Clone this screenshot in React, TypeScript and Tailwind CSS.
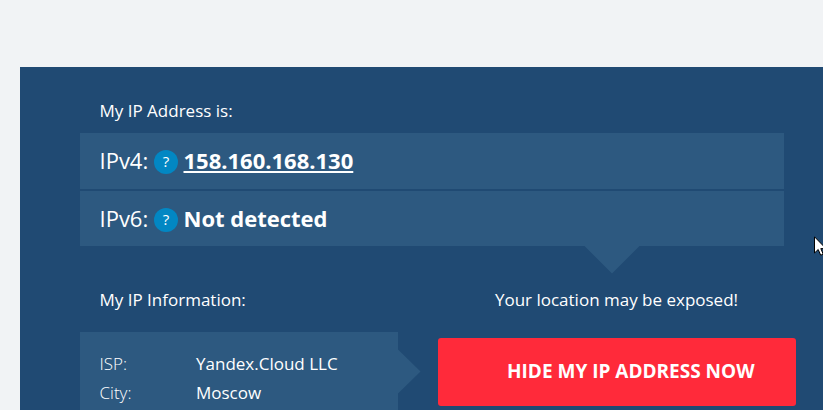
import React from "react";

function HelpBadge() {
  return (
    <span className="ml-[6px] mr-[5.5px] mt-[3px] flex h-6 w-6 shrink-0 items-center justify-center rounded-full bg-[#0287c3] pb-px text-[15px] leading-none">
      ?
    </span>
  );
}

function AddressRow({ label, children, className }: { label: string; children: React.ReactNode; className: string }) {
  return (
    <div className={`flex items-center bg-[#2d5980] pl-5 text-[22px] leading-[30px] ${className}`}>
      <span className="-ml-[0.5px] mr-[0.5px] w-[48px] whitespace-nowrap">{label}</span>
      <HelpBadge />
      {children}
    </div>
  );
}

function InfoRow({ label, value }: { label: string; value: string }) {
  return (
    <div className="flex h-[29px] items-center">
      <dt className="w-[96.5px] font-light">{label}</dt>
      <dd>{value}</dd>
    </div>
  );
}

export default function App() {
  return (
    <div className="relative h-[410px] w-[823px] overflow-hidden bg-[#f1f3f5] pl-5 pt-[67px] font-['Open_Sans','Noto_Sans',sans-serif] text-[17px] text-white">
      <main className="h-[343px] bg-[#204a73] pl-[60px] pt-[32px]">
        <h2 className="h-[34px] pl-[19.5px] leading-6">My IP Address is:</h2>
        <section className="relative flex w-[704px] flex-col gap-[2px]">
          <AddressRow label="IPv4:" className="h-14 pb-[2px]">
            <a className="font-bold underline decoration-2 underline-offset-2">158.160.168.130</a>
          </AddressRow>
          <AddressRow label="IPv6:" className="h-[55px] pb-px">
            <span className="font-bold">Not detected</span>
          </AddressRow>
          <svg className="absolute left-[504px] top-full" width="56" height="28" viewBox="0 0 56 28">
            <path d="M0.5 0H55.5L28 27.5Z" fill="#2d5980" />
          </svg>
        </section>
        <div className="flex pt-[42px]">
          <section className="w-[318px]">
            <h2 className="h-[44px] pl-[19.5px] leading-6">My IP Information:</h2>
            <dl className="relative h-[160px] bg-[#2d5980] pl-[19.5px] pt-[17px]">
              <InfoRow label="ISP:" value="Yandex.Cloud LLC" />
              <InfoRow label="City:" value="Moscow" />
              <svg className="absolute left-full top-[17px]" width="23" height="46" viewBox="0 0 23 46">
                <path d="M0 0.5L22.5 22.5L0 44.5Z" fill="#2d5980" />
              </svg>
            </dl>
          </section>
          <section className="ml-10 w-[358px]">
            <p className="h-[50px] pr-px text-center leading-6">Your location may be exposed!</p>
            <button className="flex h-[68px] w-full items-center whitespace-nowrap rounded-[3px] bg-[#ff2a3a] pb-[2px] pl-[69px] text-[19px] font-bold">
              HIDE MY IP ADDRESS NOW
            </button>
          </section>
        </div>
      </main>
      <svg className="absolute left-[814px] top-[236px]" width="12" height="20" viewBox="0 0 12 20">
        <path d="M0.5 0.8V17L4.2 13.5L6.7 19.2L9.2 18.1L6.8 12.6H12Z" fill="#fff" stroke="#000" strokeWidth="1" />
      </svg>
    </div>
  );
}
